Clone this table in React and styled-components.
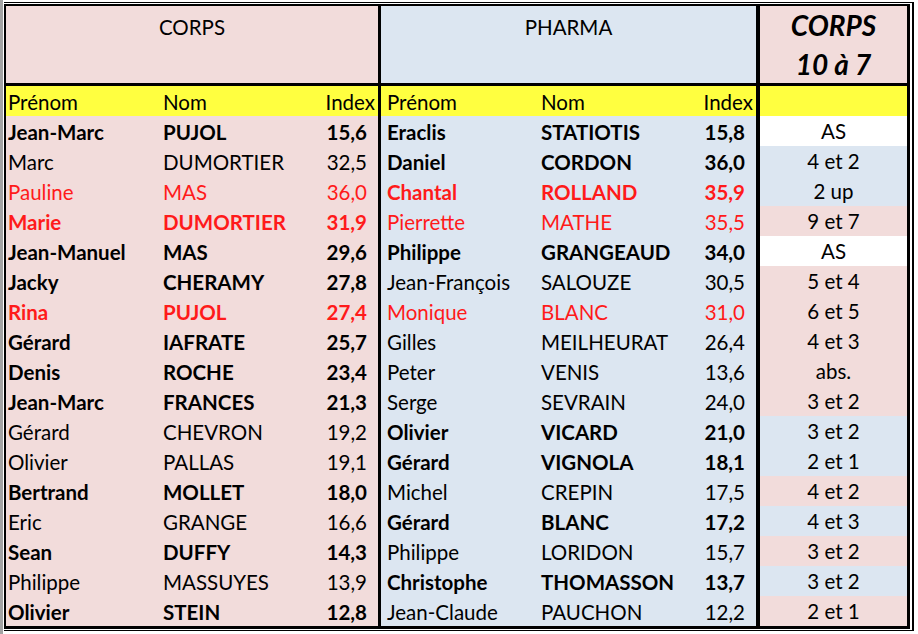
import styled, { createGlobalStyle } from 'styled-components';

const corps = [
  ['Jean-Marc', 'PUJOL', '15,6', 'b'],
  ['Marc', 'DUMORTIER', '32,5', 'n'],
  ['Pauline', 'MAS', '36,0', 'r'],
  ['Marie', 'DUMORTIER', '31,9', 'rb'],
  ['Jean-Manuel', 'MAS', '29,6', 'b'],
  ['Jacky', 'CHERAMY', '27,8', 'b'],
  ['Rina', 'PUJOL', '27,4', 'rb'],
  ['Gérard', 'IAFRATE', '25,7', 'b'],
  ['Denis', 'ROCHE', '23,4', 'b'],
  ['Jean-Marc', 'FRANCES', '21,3', 'b'],
  ['Gérard', 'CHEVRON', '19,2', 'n'],
  ['Olivier', 'PALLAS', '19,1', 'n'],
  ['Bertrand', 'MOLLET', '18,0', 'b'],
  ['Eric', 'GRANGE', '16,6', 'n'],
  ['Sean', 'DUFFY', '14,3', 'b'],
  ['Philippe', 'MASSUYES', '13,9', 'n'],
  ['Olivier', 'STEIN', '12,8', 'b'],
];

const pharma = [
  ['Eraclis', 'STATIOTIS', '15,8', 'b'],
  ['Daniel', 'CORDON', '36,0', 'b'],
  ['Chantal', 'ROLLAND', '35,9', 'rb'],
  ['Pierrette', 'MATHE', '35,5', 'r'],
  ['Philippe', 'GRANGEAUD', '34,0', 'b'],
  ['Jean-François', 'SALOUZE', '30,5', 'n'],
  ['Monique', 'BLANC', '31,0', 'r'],
  ['Gilles', 'MEILHEURAT', '26,4', 'n'],
  ['Peter', 'VENIS', '13,6', 'n'],
  ['Serge', 'SEVRAIN', '24,0', 'n'],
  ['Olivier', 'VICARD', '21,0', 'b'],
  ['Gérard', 'VIGNOLA', '18,1', 'b'],
  ['Michel', 'CREPIN', '17,5', 'n'],
  ['Gérard', 'BLANC', '17,2', 'b'],
  ['Philippe', 'LORIDON', '15,7', 'n'],
  ['Christophe', 'THOMASSON', '13,7', 'b'],
  ['Jean-Claude', 'PAUCHON', '12,2', 'n'],
];

const PINK = '#f2dcdb';
const BLUE = '#dce6f1';

const matches = [
  ['AS', '#ffffff'],
  ['4 et 2', BLUE],
  ['2 up', BLUE],
  ['9 et 7', PINK],
  ['AS', '#ffffff'],
  ['5 et 4', PINK],
  ['6 et 5', PINK],
  ['4 et 3', PINK],
  ['abs.', PINK],
  ['3 et 2', PINK],
  ['3 et 2', BLUE],
  ['2 et 1', BLUE],
  ['4 et 2', PINK],
  ['4 et 3', BLUE],
  ['3 et 2', PINK],
  ['3 et 2', BLUE],
  ['2 et 1', PINK],
];

const GlobalStyle = createGlobalStyle`
  * { box-sizing: border-box; }
  body {
    margin: 0;
    background: #ffffff;
    font-family: Lato, "Open Sans", sans-serif;
    color: #000;
  }
`;

const Page = styled.div`
  display: flex;
  height: 634px;
  width: 918px;
  overflow: hidden;
`;

const EdgeBar = styled.div`
  width: 3px;
  background: #a3a3a3;
  flex-shrink: 0;
`;

const Frame = styled.div`
  margin: 2px 0 0 1px;
  align-self: flex-start;
  border-top: 1px solid #000;
  border-right: 2px solid #000;
  border-bottom: 1px solid #000;
  padding: 1px 2px 1px 0;
`;

const Sheet = styled.div`
  display: flex;
  border: 3px solid #000;
  border-left-width: 2px;
  border-top-width: 2px;
`;

const Section = styled.div`
  width: ${(p) => p.$width}px;
  background: ${(p) => p.$bg};
  border-right: ${(p) => p.$rule}px solid #000;
  display: flex;
  flex-direction: column;
`;

const Title = styled.div`
  height: 80px;
  border-bottom: 3px solid #000;
  text-align: center;
  font-size: 20.5px;
  padding-top: 9px;
`;

const BigTitle = styled(Title)`
  font-size: 28px;
  font-weight: 700;
  font-style: italic;
  line-height: 39px;
  padding-top: 0;
`;

const HeadRow = styled.div`
  display: grid;
  grid-template-columns: ${(p) => p.$cols};
  align-items: center;
  height: 30px;
  padding: 1px 3px 0 ${(p) => p.$pl}px;
  background: #ffff40;
  font-size: 20.5px;
`;

const Row = styled.div`
  display: grid;
  grid-template-columns: ${(p) => p.$cols};
  align-items: center;
  height: 30px;
  padding: 1px 11px 0 ${(p) => p.$pl}px;
  font-size: 20.5px;
  font-weight: ${(p) => (p.$kind.includes('b') ? 700 : 400)};
  color: ${(p) => (p.$kind.includes('r') ? '#ff1a1a' : '#000')};
`;

const Index = styled.span`
  text-align: right;
`;

const MatchCell = styled.div`
  height: 30px;
  padding-top: 1px;
  line-height: 29px;
  text-align: center;
  font-size: 20.5px;
  background: ${(p) => p.$bg};
`;

const Team = ({ name, rows, width, bg, rule, pl, cols }) => (
  <Section $width={width} $bg={bg} $rule={rule}>
    <Title>{name}</Title>
    <HeadRow $cols={cols} $pl={pl}>
      <span>Prénom</span>
      <span>Nom</span>
      <Index>Index</Index>
    </HeadRow>
    {rows.map(([first, last, idx, kind], i) => (
      <Row key={i} $cols={cols} $pl={pl} $kind={kind}>
        <span>{first}</span>
        <span>{last}</span>
        <Index>{idx}</Index>
      </Row>
    ))}
  </Section>
);

export default function App() {
  return (
    <>
      <GlobalStyle />
      <Page>
        <EdgeBar />
        <Frame>
          <Sheet>
            <Team name="CORPS" rows={corps} width={375} bg={PINK} rule={3} pl={2} cols="155px 1fr auto" />
            <Team name="PHARMA" rows={pharma} width={379} bg={BLUE} rule={4} pl={6} cols="154px 1fr auto" />
            <Section $width={147} $bg={PINK} $rule={0}>
              <BigTitle>
                CORPS
                <br />
                10 à 7
              </BigTitle>
              <HeadRow $cols="1fr" $pl={0} />
              {matches.map(([label, bg], i) => (
                <MatchCell key={i} $bg={bg}>
                  {label}
                </MatchCell>
              ))}
            </Section>
          </Sheet>
        </Frame>
      </Page>
    </>
  );
}
